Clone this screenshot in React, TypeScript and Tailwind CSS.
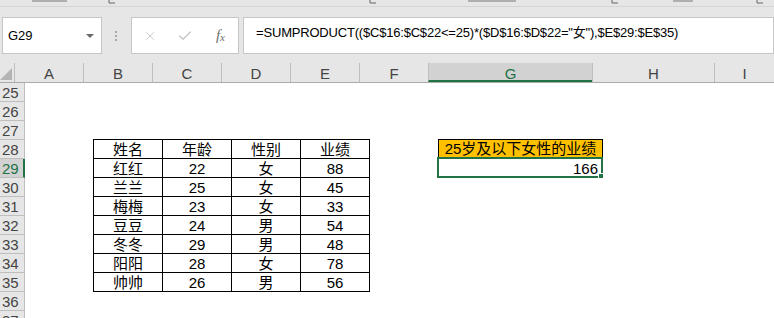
import { Check, X } from 'lucide-react';

const colHeads = [
  { name: 'A', w: 'w-[68px]', first: true },
  { name: 'B', w: 'w-[69px]' },
  { name: 'C', w: 'w-[69px]' },
  { name: 'D', w: 'w-[69px]' },
  { name: 'E', w: 'w-[69px]' },
  { name: 'F', w: 'w-[69px]' },
  { name: 'G', w: 'w-[164px]', active: true },
  { name: 'H', w: 'w-[122px]' },
  { name: 'I', w: 'w-[60px]' },
];

const rowNums = [25, 26, 27, 28, 29, 30, 31, 32, 33, 34, 35, 36, 37];

const head = ['姓名', '年龄', '性别', '业绩'];
const data = [
  ['红红', '22', '女', '88'],
  ['兰兰', '25', '女', '45'],
  ['梅梅', '23', '女', '33'],
  ['豆豆', '24', '男', '54'],
  ['冬冬', '29', '男', '48'],
  ['阳阳', '28', '女', '78'],
  ['帅帅', '26', '男', '56'],
];

const formula = '=SUMPRODUCT(($C$16:$C$22<=25)*($D$16:$D$22="女"),$E$29:$E$35)';

// bottoms of ribbon group labels peeking out above the formula bar
function Stub({ w }: { w: string }) {
  return <span className={`${w} h-[2px] bg-[#8a8a8a] opacity-60`} />;
}

function Launcher() {
  return (
    <svg width="7" height="4" viewBox="0 0 7 4">
      <path d="M1 0v3h6" fill="none" stroke="#666" strokeWidth="1" />
    </svg>
  );
}

export default function App() {
  return (
    <div className="w-[774px] h-[318px] overflow-hidden bg-[#e6e6e6] text-black font-['Liberation_Sans','Noto_Sans_CJK_SC',sans-serif]">
      {/* ribbon remnants */}
      <div className="h-[7px] overflow-hidden border-b border-[#d5d5d5] flex items-start">
        <span className="w-[32px]" />
        <Stub w="w-[35px]" />
        <span className="w-[41px]" />
        <Launcher />
        <span className="w-[254px]" />
        <Launcher />
        <span className="w-[92px]" />
        <Stub w="w-[48px]" />
        <span className="w-[95px]" />
        <Launcher />
        <span className="w-[55px]" />
        <Stub w="w-[20px]" />
        <span className="w-[63px]" />
        <Launcher />
      </div>

      {/* formula bar */}
      <div className="flex items-start pt-[10px] h-[56px]">
        <div className="ml-[2px] w-[101px] h-[37px] bg-white border border-[#c6c6c6] flex items-center justify-between pl-[5px] pr-[7px]">
          <span className="text-[13px]">G29</span>
          <svg width="8" height="4" viewBox="0 0 8 4">
            <path d="M0 0h8L4 4z" fill="#6a6a6a" />
          </svg>
        </div>
        <div className="w-[30px] h-[37px] flex flex-col items-center justify-center gap-[2px]">
          <span className="w-[2px] h-[2px] bg-[#a8a8a8]" />
          <span className="w-[2px] h-[2px] bg-[#a8a8a8]" />
          <span className="w-[2px] h-[2px] bg-[#a8a8a8]" />
        </div>
        <div className="w-[110px] h-[37px] bg-white border border-[#c6c6c6] flex items-center">
          <div className="flex-1 flex justify-center">
            <X size={14} strokeWidth={1.4} color="#c4c4c4" />
          </div>
          <div className="flex-1 flex justify-center">
            <Check size={16} strokeWidth={2} color="#c4c4c4" />
          </div>
          <div className="flex-1 flex justify-center text-[#6e6e6e] font-['Liberation_Serif',serif] italic leading-none">
            <span className="text-[15px]">f</span>
            <span className="text-[11px] mt-[4px]">x</span>
          </div>
        </div>
        <div className="ml-[4px] w-[540px] h-[37px] bg-white border border-[#c6c6c6] pl-[12px] pt-[2px]">
          <span className="text-[13px] leading-[16px] tracking-[-0.2px] whitespace-nowrap">{formula}</span>
        </div>
      </div>

      {/* column headers */}
      <div className="flex h-[20px] border-b border-[#ababab] text-[15px] text-[#444]">
        <div className="w-[25px] border-r border-[#bebebe] flex items-end justify-end pr-[2px] pb-[2px]">
          <svg width="12" height="12" viewBox="0 0 12 12">
            <path d="M12 0v12H0z" fill="#b4b4b4" />
          </svg>
        </div>
        {colHeads.map((c) => (
          <div
            key={c.name}
            className={`${c.w} shrink-0 text-center pt-[3px] leading-[16px] ${c.first ? '' : 'border-l border-[#bebebe]'} ${
              c.active ? 'bg-[#d2d2d2] text-[#217346] border-b-2 border-b-[#217346]' : ''
            }`}
          >
            {c.name}
          </div>
        ))}
      </div>

      {/* sheet body */}
      <div className="flex bg-white">
        <div className="w-[25px] shrink-0 flex flex-col bg-[#e6e6e6] text-[15px] text-[#444]">
          {rowNums.map((n) => (
            <div
              key={n}
              className={`h-[19px] shrink-0 border-b border-[#bebebe] pl-[2px] pt-[2px] leading-[16px] ${
                n === 29 ? 'bg-[#d2d2d2] text-[#217346] border-r-2 border-r-[#217346]' : 'border-r border-r-[#bebebe]'
              }`}
            >
              {n}
            </div>
          ))}
        </div>

        <div className="grid grid-cols-[68px_69px_69px_69px_69px_69px_164px_122px_1fr] grid-rows-[repeat(13,19px)] flex-1 text-[15px]">
          {/* data table B28:E35 */}
          <div className="col-start-2 col-span-5 row-start-4 row-span-8 -mt-px w-[277px] h-[153px] self-start grid grid-cols-[69px_69px_69px_69px] grid-rows-[repeat(8,19px)] border-r border-b border-black">
            {[head, ...data].map((row, i) =>
              row.map((cell, j) => (
                <div
                  key={`${i}-${j}`}
                  className="border-l border-t border-black text-center pt-[2px] leading-[16px]"
                >
                  {cell}
                </div>
              ))
            )}
          </div>

          {/* G28 label */}
          <div className="col-start-7 row-start-4 -mt-px w-[165px] h-[20px] self-start bg-[#ffc000] border border-black text-center leading-[16px] pt-px whitespace-nowrap">
            25岁及以下女性的业绩
          </div>

          {/* G29 selected value */}
          <div className="col-start-7 row-start-5 relative text-right pr-[4px] pt-[2px] leading-[16px]">
            166
            <div className="absolute top-[-2px] bottom-0 left-[-1px] right-[-1px] border-2 border-[#217346]">
              <div className="absolute right-[-3px] bottom-[-3px] w-[6px] h-[6px] bg-[#217346] border border-white" />
            </div>
          </div>
        </div>
      </div>
    </div>
  );
}
